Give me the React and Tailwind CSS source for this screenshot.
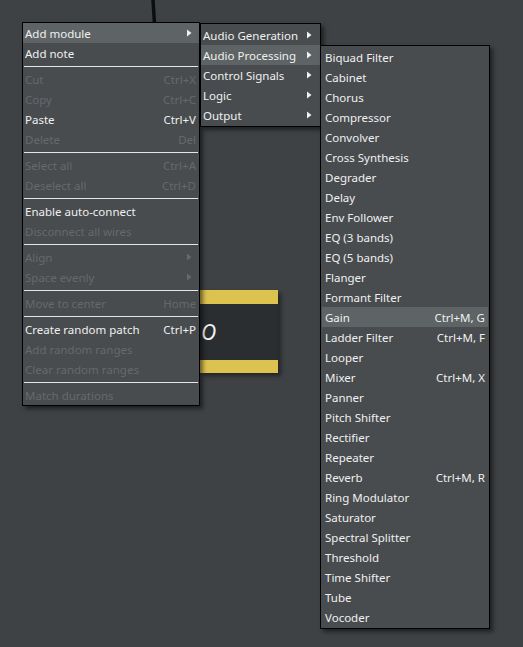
import React from 'react'

const mainMenu = [
  { label: 'Add module', sub: true, active: true },
  { label: 'Add note' },
  'sep',
  { label: 'Cut', key: 'Ctrl+X', off: true },
  { label: 'Copy', key: 'Ctrl+C', off: true },
  { label: 'Paste', key: 'Ctrl+V' },
  { label: 'Delete', key: 'Del', off: true },
  'sep',
  { label: 'Select all', key: 'Ctrl+A', off: true },
  { label: 'Deselect all', key: 'Ctrl+D', off: true },
  'sep',
  { label: 'Enable auto-connect' },
  { label: 'Disconnect all wires', off: true },
  'sep',
  { label: 'Align', sub: true, off: true },
  { label: 'Space evenly', sub: true, off: true },
  'sep',
  { label: 'Move to center', key: 'Home', off: true },
  'sep',
  { label: 'Create random patch', key: 'Ctrl+P' },
  { label: 'Add random ranges', off: true },
  { label: 'Clear random ranges', off: true },
  'sep',
  { label: 'Match durations', off: true },
]

const categories = [
  { label: 'Audio Generation' },
  { label: 'Audio Processing', active: true },
  { label: 'Control Signals' },
  { label: 'Logic' },
  { label: 'Output' },
]

const modules = [
  { label: 'Biquad Filter' },
  { label: 'Cabinet' },
  { label: 'Chorus' },
  { label: 'Compressor' },
  { label: 'Convolver' },
  { label: 'Cross Synthesis' },
  { label: 'Degrader' },
  { label: 'Delay' },
  { label: 'Env Follower' },
  { label: 'EQ (3 bands)' },
  { label: 'EQ (5 bands)' },
  { label: 'Flanger' },
  { label: 'Formant Filter' },
  { label: 'Gain', key: 'Ctrl+M, G', active: true },
  { label: 'Ladder Filter', key: 'Ctrl+M, F' },
  { label: 'Looper' },
  { label: 'Mixer', key: 'Ctrl+M, X' },
  { label: 'Panner' },
  { label: 'Pitch Shifter' },
  { label: 'Rectifier' },
  { label: 'Repeater' },
  { label: 'Reverb', key: 'Ctrl+M, R' },
  { label: 'Ring Modulator' },
  { label: 'Saturator' },
  { label: 'Spectral Splitter' },
  { label: 'Threshold' },
  { label: 'Time Shifter' },
  { label: 'Tube' },
  { label: 'Vocoder' },
]

function Arrow({ off }) {
  return (
    <svg width="5" height="8" viewBox="0 0 5 8" className="shrink-0">
      <path d="M0 0.5 L4.5 4 L0 7.5 Z" fill={off ? '#66696c' : '#f0f0f0'} />
    </svg>
  )
}

function Item({ item, pl, pr }) {
  return (
    <div
      className={
        'flex h-[20px] items-center justify-between ' +
        pl + ' ' + pr + ' ' +
        (item.active ? 'bg-[#5e6465] ' : '') +
        (item.off ? 'text-[#66696c]' : 'text-[#f0f0f0]')
      }
    >
      <span className="whitespace-nowrap pt-px">{item.label}</span>
      {item.key && <span className="whitespace-nowrap pt-px">{item.key}</span>}
      {item.sub && <Arrow off={item.off} />}
    </div>
  )
}

export default function App() {
  return (
    <div
      className="relative h-[647px] w-[523px] overflow-hidden bg-[#3f4245] text-[11.5px] leading-none"
      style={{ fontFamily: '"Noto Sans", "Open Sans", sans-serif' }}
    >
      {/* wire */}
      <svg className="absolute left-0 top-0" width="523" height="30">
        <path d="M153 0 L154.5 24" stroke="#0d0d0d" strokeWidth="3.5" />
      </svg>

      {/* node */}
      <div className="absolute left-[200px] top-[290px] flex h-[83px] w-[78px] flex-col shadow-[3px_3px_4px_rgba(0,0,0,0.45)]">
        <div className="h-[14px] bg-[#dcc24f]" />
        <div className="flex flex-1 items-center bg-[#2b2e31] pl-[1px] text-[21px] italic text-[#f2f2f2]">
          O
        </div>
        <div className="h-[13px] bg-[#dcc24f]" />
      </div>

      {/* main context menu */}
      <div className="absolute left-[22px] top-[22px] w-[178px] border border-black bg-[#484c4f] shadow-[3px_3px_4px_rgba(0,0,0,0.5)]">
        {mainMenu.map((item, i) =>
          item === 'sep' ? (
            <div key={i} className="flex h-[6px] items-center px-px">
              <div className="h-px w-full bg-[#e6e6e6]" />
            </div>
          ) : (
            <Item key={i} item={item} pl="pl-[2px]" pr={item.sub ? 'pr-[7px]' : 'pr-[3px]'} />
          )
        )}
      </div>

      {/* category submenu */}
      <div className="absolute left-[200px] top-[23px] w-[121px] border border-black bg-[#484c4f] py-px shadow-[3px_3px_4px_rgba(0,0,0,0.5)]">
        {categories.map((item, i) => (
          <Item key={i} item={{ ...item, sub: true }} pl="pl-[2px]" pr="pr-[8px]" />
        ))}
      </div>

      {/* module submenu */}
      <div className="absolute left-[320px] top-[45px] w-[170px] border border-black bg-[#484c4f] p-px shadow-[3px_3px_4px_rgba(0,0,0,0.5)]">
        {modules.map((item, i) => (
          <Item key={i} item={item} pl="pl-[3px]" pr="pr-[3px]" />
        ))}
      </div>
    </div>
  )
}
